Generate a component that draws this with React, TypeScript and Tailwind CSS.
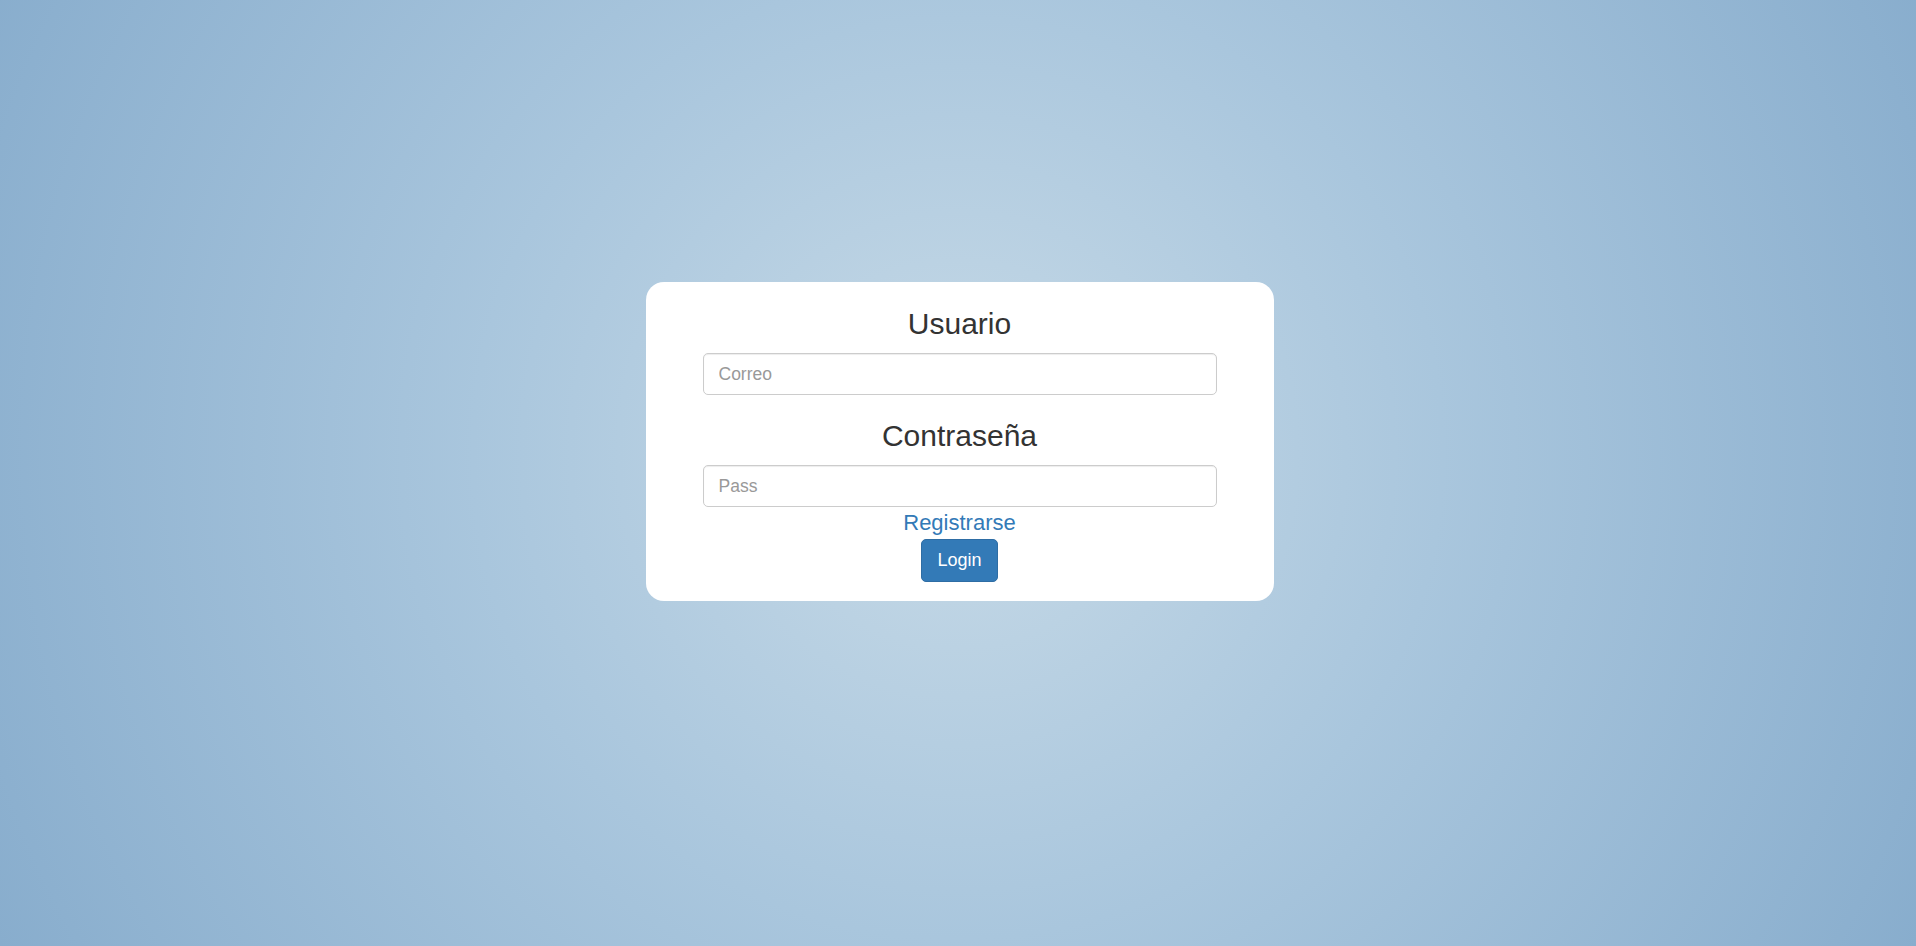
export default function App() {
  return (
    <div
      className="min-h-screen w-full bg-[radial-gradient(circle_at_50%_48%,#c7dae7_0%,#a9c6dd_45%,#88adcd_100%)] pt-[282px] pl-[3px]"
      style={{ fontFamily: '"Liberation Sans", Arial, sans-serif' }}
    >
      <form
        className="mx-auto flex w-[628px] flex-col items-center rounded-[18px] bg-white px-[57px] pt-[25px] pb-[19px] text-[#333]"
        onSubmit={(e) => e.preventDefault()}
      >
        <h3 className="text-[30px] leading-[33px] font-normal">Usuario</h3>
        <input
          type="email"
          placeholder="Correo"
          className="mt-[13px] h-[42px] w-full rounded-[5px] border border-[#ccc] px-[15px] text-[17.5px] shadow-[inset_0_1px_1px_rgba(0,0,0,0.075)] outline-none placeholder:text-[#999]"
        />
        <h3 className="mt-[24px] text-[30px] leading-[33px] font-normal">Contraseña</h3>
        <input
          type="password"
          placeholder="Pass"
          className="mt-[13px] h-[42px] w-full rounded-[5px] border border-[#ccc] px-[15px] text-[17.5px] shadow-[inset_0_1px_1px_rgba(0,0,0,0.075)] outline-none placeholder:text-[#999]"
        />
        <a href="#" className="mt-[3px] text-[22px] leading-[25px] text-[#337ab7]">
          Registrarse
        </a>
        <button
          type="submit"
          className="mt-[4px] h-[43px] rounded-[5px] border border-[#2e6da4] bg-[#337ab7] px-[15px] text-[18px] text-white"
        >
          Login
        </button>
      </form>
    </div>
  );
}
